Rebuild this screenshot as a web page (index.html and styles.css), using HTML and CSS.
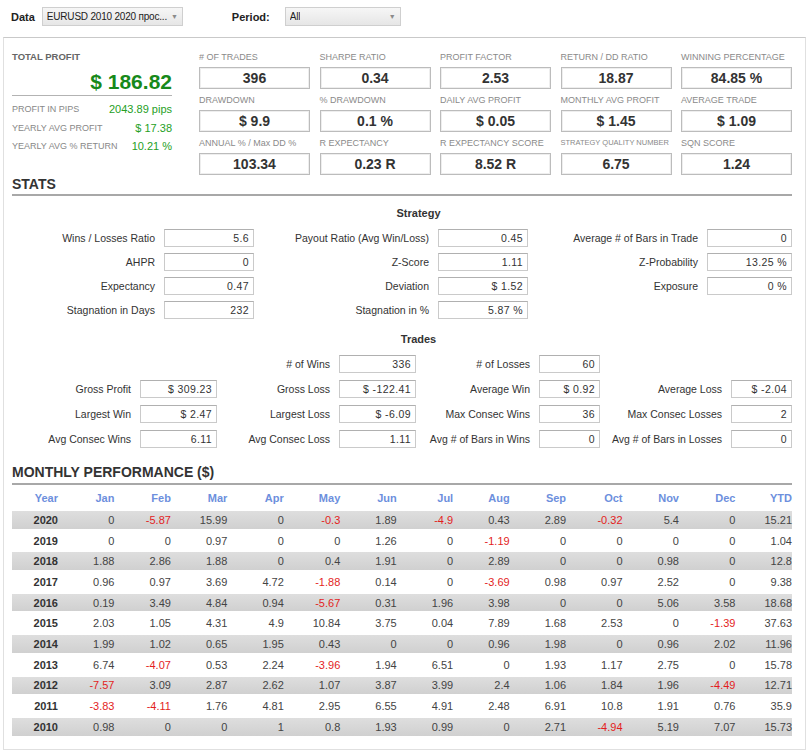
FILE: index.html
```html
<!DOCTYPE html>
<html lang="en">
<head>
    <meta charset="UTF-8">
    <title>Strategy Report</title>
    <link rel="stylesheet" href="styles.css">
</head>
<body>
    <div class="topbar">
        <label>Data</label>
        <div class="select data-select"><span class="select-text">EURUSD 2010 2020 прос...</span><span class="arrow">&#9660;</span></div>
        <label class="period-label">Period:</label>
        <div class="select period-select"><span class="select-text">All</span><span class="arrow">&#9660;</span></div>
    </div>

    <div class="panel">
        <div class="overview">
            <div class="summary">
                <div class="caption">Total Profit</div>
                <div class="big">$ 186.82</div>
                <div class="sumrow first"><span class="sumlabel">Profit in pips</span><span class="sumvalue">2043.89 pips</span></div>
                <div class="sumrow"><span class="sumlabel">Yearly avg profit</span><span class="sumvalue">$ 17.38</span></div>
                <div class="sumrow"><span class="sumlabel">Yearly avg % return</span><span class="sumvalue">10.21 %</span></div>
            </div>

            <div class="metrics">
                <div><div class="m-label"># of trades</div><div class="m-box">396</div></div>
                <div><div class="m-label">Sharpe ratio</div><div class="m-box">0.34</div></div>
                <div><div class="m-label">Profit factor</div><div class="m-box">2.53</div></div>
                <div><div class="m-label">Return / DD ratio</div><div class="m-box">18.87</div></div>
                <div><div class="m-label">Winning percentage</div><div class="m-box">84.85 %</div></div>

                <div><div class="m-label">Drawdown</div><div class="m-box">$ 9.9</div></div>
                <div><div class="m-label">% Drawdown</div><div class="m-box">0.1 %</div></div>
                <div><div class="m-label">Daily avg profit</div><div class="m-box">$ 0.05</div></div>
                <div><div class="m-label">Monthly avg profit</div><div class="m-box">$ 1.45</div></div>
                <div><div class="m-label">Average trade</div><div class="m-box">$ 1.09</div></div>

                <div><div class="m-label no-caps">ANNUAL % / Max DD %</div><div class="m-box">103.34</div></div>
                <div><div class="m-label">R expectancy</div><div class="m-box">0.23 R</div></div>
                <div><div class="m-label">R expectancy score</div><div class="m-box">8.52 R</div></div>
                <div><div class="m-label small">Strategy quality number</div><div class="m-box">6.75</div></div>
                <div><div class="m-label">SQN score</div><div class="m-box">1.24</div></div>
            </div>
        </div>

        <h2 class="section-title">Stats</h2>

        <div class="group-title">Strategy</div>
        <div class="stats-grid">
            <div class="s-label">Wins / Losses Ratio</div><div class="field">5.6</div>
            <div class="s-label">Payout Ratio (Avg Win/Loss)</div><div class="field">0.45</div>
            <div class="s-label">Average # of Bars in Trade</div><div class="field">0</div>

            <div class="s-label">AHPR</div><div class="field">0</div>
            <div class="s-label">Z-Score</div><div class="field">1.11</div>
            <div class="s-label">Z-Probability</div><div class="field">13.25 %</div>

            <div class="s-label">Expectancy</div><div class="field">0.47</div>
            <div class="s-label">Deviation</div><div class="field">$ 1.52</div>
            <div class="s-label">Exposure</div><div class="field">0 %</div>

            <div class="s-label">Stagnation in Days</div><div class="field">232</div>
            <div class="s-label">Stagnation in %</div><div class="field">5.87 %</div>
        </div>

        <div class="group-title trades-title">Trades</div>
        <div class="trades-grid">
            <div></div><div></div>
            <div class="s-label"># of Wins</div><div class="field">336</div>
            <div class="s-label"># of Losses</div><div class="field">60</div>
            <div></div><div></div>

            <div class="s-label">Gross Profit</div><div class="field">$ 309.23</div>
            <div class="s-label">Gross Loss</div><div class="field">$ -122.41</div>
            <div class="s-label">Average Win</div><div class="field">$ 0.92</div>
            <div class="s-label">Average Loss</div><div class="field">$ -2.04</div>

            <div class="s-label">Largest Win</div><div class="field">$ 2.47</div>
            <div class="s-label">Largest Loss</div><div class="field">$ -6.09</div>
            <div class="s-label">Max Consec Wins</div><div class="field">36</div>
            <div class="s-label">Max Consec Losses</div><div class="field">2</div>

            <div class="s-label">Avg Consec Wins</div><div class="field">6.11</div>
            <div class="s-label">Avg Consec Loss</div><div class="field">1.11</div>
            <div class="s-label">Avg # of Bars in Wins</div><div class="field">0</div>
            <div class="s-label">Avg # of Bars in Losses</div><div class="field">0</div>
        </div>

        <h2 class="section-title monthly-title">Monthly Performance ($)</h2>
        <table class="monthly">
            <thead>
                <tr>
                    <th>Year</th><th>Jan</th><th>Feb</th><th>Mar</th><th>Apr</th><th>May</th><th>Jun</th>
                    <th>Jul</th><th>Aug</th><th>Sep</th><th>Oct</th><th>Nov</th><th>Dec</th><th>YTD</th>
                </tr>
            </thead>
            <tbody>
                <tr><td>2020</td><td>0</td><td class="neg">-5.87</td><td>15.99</td><td>0</td><td class="neg">-0.3</td><td>1.89</td><td class="neg">-4.9</td><td>0.43</td><td>2.89</td><td class="neg">-0.32</td><td>5.4</td><td>0</td><td>15.21</td></tr>
                <tr><td>2019</td><td>0</td><td>0</td><td>0.97</td><td>0</td><td>0</td><td>1.26</td><td>0</td><td class="neg">-1.19</td><td>0</td><td>0</td><td>0</td><td>0</td><td>1.04</td></tr>
                <tr><td>2018</td><td>1.88</td><td>2.86</td><td>1.88</td><td>0</td><td>0.4</td><td>1.91</td><td>0</td><td>2.89</td><td>0</td><td>0</td><td>0.98</td><td>0</td><td>12.8</td></tr>
                <tr><td>2017</td><td>0.96</td><td>0.97</td><td>3.69</td><td>4.72</td><td class="neg">-1.88</td><td>0.14</td><td>0</td><td class="neg">-3.69</td><td>0.98</td><td>0.97</td><td>2.52</td><td>0</td><td>9.38</td></tr>
                <tr><td>2016</td><td>0.19</td><td>3.49</td><td>4.84</td><td>0.94</td><td class="neg">-5.67</td><td>0.31</td><td>1.96</td><td>3.98</td><td>0</td><td>0</td><td>5.06</td><td>3.58</td><td>18.68</td></tr>
                <tr><td>2015</td><td>2.03</td><td>1.05</td><td>4.31</td><td>4.9</td><td>10.84</td><td>3.75</td><td>0.04</td><td>7.89</td><td>1.68</td><td>2.53</td><td>0</td><td class="neg">-1.39</td><td>37.63</td></tr>
                <tr><td>2014</td><td>1.99</td><td>1.02</td><td>0.65</td><td>1.95</td><td>0.43</td><td>0</td><td>0</td><td>0.96</td><td>1.98</td><td>0</td><td>0.96</td><td>2.02</td><td>11.96</td></tr>
                <tr><td>2013</td><td>6.74</td><td class="neg">-4.07</td><td>0.53</td><td>2.24</td><td class="neg">-3.96</td><td>1.94</td><td>6.51</td><td>0</td><td>1.93</td><td>1.17</td><td>2.75</td><td>0</td><td>15.78</td></tr>
                <tr><td>2012</td><td class="neg">-7.57</td><td>3.09</td><td>2.87</td><td>2.62</td><td>1.07</td><td>3.87</td><td>3.99</td><td>2.4</td><td>1.06</td><td>1.84</td><td>1.96</td><td class="neg">-4.49</td><td>12.71</td></tr>
                <tr><td>2011</td><td class="neg">-3.83</td><td class="neg">-4.11</td><td>1.76</td><td>4.81</td><td>2.95</td><td>6.55</td><td>4.91</td><td>2.48</td><td>6.91</td><td>10.8</td><td>1.91</td><td>0.76</td><td>35.9</td></tr>
                <tr><td>2010</td><td>0.98</td><td>0</td><td>0</td><td>1</td><td>0.8</td><td>1.93</td><td>0.99</td><td>0</td><td>2.71</td><td class="neg">-4.94</td><td>5.19</td><td>7.07</td><td>15.73</td></tr>
            </tbody>
        </table>
    </div>
</body>
</html>
```

FILE: styles.css
```css
body {
    margin: 0;
    font-family: "Liberation Sans", Arial, sans-serif;
    color: #333;
    background-color: white;
}
.topbar {
    display: flex;
    align-items: center;
    height: 33px;
    padding-left: 11px;
    font-size: 11px;
}
.topbar label {
    font-weight: bold;
    color: #222;
}
.select {
    display: flex;
    align-items: center;
    justify-content: space-between;
    height: 19px;
    box-sizing: border-box;
    padding: 0 4px 0 4px;
    border: 1px solid #cfcfcf;
    background: linear-gradient(#f6f6f6, #e6e6e6);
    color: #222;
    margin-left: 7px;
}
.select-text {
    white-space: nowrap;
    overflow: hidden;
    font-size: 10px;
    letter-spacing: -0.2px;
}
.data-select {
    width: 141px;
}
.period-label {
    margin-left: 49px;
}
.period-select {
    width: 116px;
    margin-left: 15px;
}
.arrow {
    flex-shrink: 0;
    font-size: 7px;
    color: #8a8a8a;
    margin-left: 2px;
}
.panel {
    margin: 4px 0 0 3px;
    width: 803px;
    box-sizing: border-box;
    border: 1px solid #e0e0e0;
    border-top-color: #c9c9c9;
    padding: 12px 13px 0 8px;
    height: 713px;
}
.overview {
    display: flex;
    gap: 27px;
}
.summary {
    width: 161px;
}
.caption {
    font-size: 9.5px;
    font-weight: bold;
    color: #666;
    line-height: 14px;
    text-transform: uppercase;
}
.big {
    text-align: right;
    font-size: 21px;
    font-weight: bold;
    color: #17891a;
    line-height: 27px;
    margin-top: 4px;
    border-bottom: 1px solid #b3b3b3;
}
.sumrow {
    display: flex;
    justify-content: space-between;
    align-items: center;
    height: 18.5px;
}
.sumrow.first {
    margin-top: 4px;
}
.sumlabel {
    font-size: 9px;
    color: #888;
    text-transform: uppercase;
}
.sumvalue {
    font-size: 11px;
    color: #25a025;
}
.metrics {
    display: grid;
    grid-template-columns: repeat(5, 111px);
    column-gap: 9.5px;
    row-gap: 4px;
}
.m-label {
    font-size: 9px;
    line-height: 14px;
    color: #8a8a8a;
    text-transform: uppercase;
    margin-bottom: 3px;
    white-space: nowrap;
}
.m-label.no-caps {
    text-transform: none;
}
.m-label.small {
    font-size: 7.5px;
}
.m-box {
    height: 22px;
    box-sizing: border-box;
    border: 1px solid #bcbcbc;
    box-shadow: inset 0 0 0 1px #eeeeee;
    text-align: center;
    font-size: 14px;
    font-weight: bold;
    line-height: 20px;
    color: #333;
}
.section-title {
    margin: 1px 0 0 0;
    font-size: 14px;
    font-weight: bold;
    line-height: 16px;
    color: #333;
    text-transform: uppercase;
    border-bottom: 2px solid #a8a8a8;
    padding-bottom: 2px;
}
.group-title {
    text-align: center;
    padding-left: 33px;
    margin-top: 10px;
    font-size: 11px;
    font-weight: bold;
    line-height: 14px;
    color: #333;
}
.trades-title {
    margin-top: 13px;
}
.stats-grid, .trades-grid {
    display: grid;
    grid-auto-rows: 18px;
    margin-top: 9px;
    font-size: 10.5px;
}
.stats-grid {
    grid-template-columns: 152px 90px 184px 90px 179px 85px;
    row-gap: 6px;
}
.trades-grid {
    grid-template-columns: 128px 77px 122px 77px 123px 61px 131px 61px;
    row-gap: 7px;
}
.s-label {
    text-align: right;
    padding-right: 9px;
    line-height: 18px;
    color: #333;
    white-space: nowrap;
}
.field {
    box-sizing: border-box;
    border: 1px solid #cacaca;
    border-top-color: #b0b0b0;
    text-align: right;
    padding-right: 4px;
    line-height: 16px;
    letter-spacing: 0.4px;
    color: #333;
}
.monthly-title {
    margin-top: 16px;
    padding-bottom: 3px;
}
.monthly {
    width: 100%;
    table-layout: fixed;
    border-collapse: separate;
    border-spacing: 0 3px;
    font-size: 11px;
}
.monthly th {
    height: 20px;
    padding: 0;
    text-align: right;
    color: #6d8fdd;
    font-weight: bold;
}
.monthly th:first-child {
    width: 46px;
}
.monthly td {
    height: 17.7px;
    padding: 0;
    text-align: right;
    color: #444;
}
.monthly td:first-child {
    font-weight: bold;
    color: #333;
}
.monthly tbody tr:nth-child(odd) td {
    background: linear-gradient(#dedede, #d0d0d0);
}
.monthly td.neg {
    color: #e31d1d;
}
```
